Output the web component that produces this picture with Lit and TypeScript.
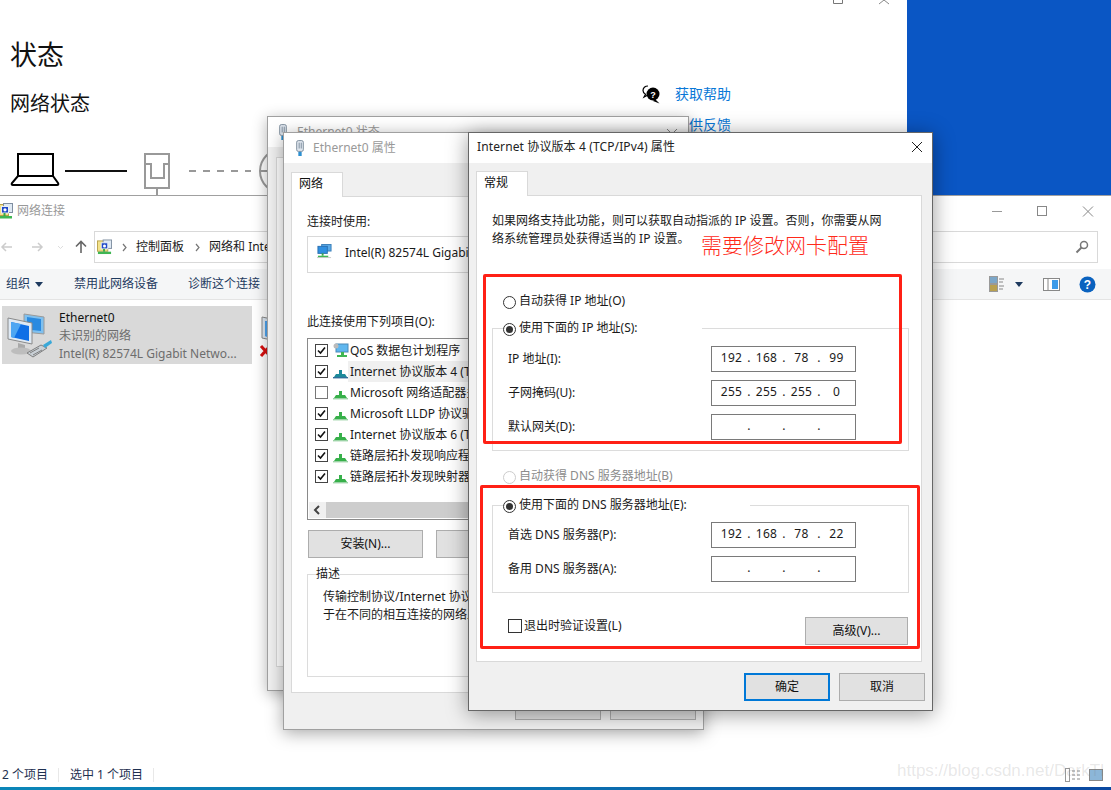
import { LitElement, html, css, svg } from "lit";
import { customElement } from "lit/decorators.js";

const netIcon = (cls = "nic") => html`<svg class=${cls} viewBox="0 0 16 16">
  <rect x="5" y="0.5" width="10" height="7" fill="#5aa9e6" stroke="#3b7fb8"/>
  <rect x="1" y="2.5" width="10" height="7.5" fill="#2f8fe0" stroke="#2a6fb0"/>
  <rect x="5" y="10" width="2" height="2.5" fill="#3aa84a"/>
  <rect x="1" y="12.5" width="11" height="2" fill="#3fb653"/>
  <rect x="0" y="14" width="15" height="1" fill="#c8c8c8"/>
</svg>`;

const cpIcon = (cls = "nic") => html`<svg class=${cls} viewBox="0 0 16 16">
  <rect x="0.5" y="1.500" width="11" height="11" fill="#f3e28a" stroke="#b9a24a"/>
  <rect x="6.500" y="0.500" width="9" height="9" fill="#dfe9f3" stroke="#7f8ea0"/>
  <rect x="4.500" y="3.500" width="7" height="6.500" fill="#1f49c8" stroke="#e8eef5"/>
  <circle cx="8" cy="6.800" r="1.600" fill="#fff"/>
  <rect x="6.500" y="10" width="2" height="3" fill="#3aa84a"/>
  <rect x="1" y="13" width="14" height="2.500" fill="#3fb653"/>
</svg>`;

const protoIcon = (teal = false) => html`<svg class="proto" viewBox="0 0 16 12">
  <path d="M6 3h3v4H6z" fill=${teal ? "#1c8a9a" : "#37b04a"}/>
  <path d="M3 7h9l2 3H1z" fill=${teal ? "#1c8a9a" : "#37b04a"}/>
  <rect x="0" y="10" width="15" height="1.4" fill=${teal ? "#2f6f9a" : "#9bd3a5"}/>
</svg>`;

const plugIcon = html`<svg class="plug" viewBox="0 0 12 20">
  <rect x="2" y="0.5" width="8" height="13" rx="2" fill="#dfe6ee" stroke="#6f7f90"/>
  <path d="M5 3v7M7.5 3v7" stroke="#6f7f90" fill="none"/>
  <rect x="4" y="14" width="4" height="5" fill="#2d8fd0"/>
</svg>`;

const bigNet = html`<svg class="bignet" viewBox="0 0 48 48">
  <path d="M18 2l20 3v17l-20-2z" fill="#7fc0ef" stroke="#9a9a9a"/>
  <path d="M21 5l14 2v12l-14-1.500z" fill="#2a8ae0"/>
  <path d="M2 6l24 5v21L2 27z" fill="#dfe9f3" stroke="#8a8a8a"/>
  <path d="M5 10l18 4v15L5 25z" fill="#0f6fe6"/>
  <path d="M5 10l10 2-7 14-3-1z" fill="#4ea6f2"/>
  <path d="M12 31l7 2v5l-7-2z" fill="#a9a9a9"/>
  <ellipse cx="15" cy="39" rx="10" ry="3.500" fill="#bdbdbd"/>
  <path d="M21 41l14-8 6 3-14 9z" fill="#c9d0d6" stroke="#7f7f7f"/>
  <path d="M24 41l9-5M27 43l9-5" stroke="#7f7f7f" fill="none"/>
  <path d="M37 33l8-5 1 3-7 5z" fill="#39a8d8"/>
</svg>`;

const ipField = (v: string[]) => html`<div class="ip">
  ${v.map((o, i) => html`<span class="oct">${o}</span>${i < 3 ? html`<span class="dot">.</span>` : ""}`)}
</div>`;

const radio = (on: boolean, dim = false) =>
  html`<i class="radio ${on ? "on" : ""} ${dim ? "dim" : ""}"></i>`;

const diagram = svg`
  <rect x="18" y="4" width="35" height="22" fill="none" stroke="#000" stroke-width="2"/>
  <path d="M18 26L12 33q-1 2 1 2h44q2 0 1-2l-5-7" fill="none" stroke="#000" stroke-width="2"/>
  <path d="M65 21h62" stroke="#111" stroke-width="2"/>
  <rect x="145" y="4" width="24" height="34" fill="none" stroke="#999" stroke-width="2"/>
  <path d="M145 14h6v14h13V14h5M157 38v8" fill="none" stroke="#999" stroke-width="2"/>
  <path d="M189 21h62" stroke="#999" stroke-width="2" stroke-dasharray="7 7"/>
  <circle cx="282" cy="21" r="22" fill="none" stroke="#999" stroke-width="2"/>
  <path d="M260 21h44" stroke="#999" stroke-width="2"/>
`;

@customElement("app-root")
export class AppRoot extends LitElement {
  static styles = css`
    :host {
      display: block;
      position: relative;
      width: 1111px;
      height: 790px;
      overflow: hidden;
      font: 12px/18px "Noto Sans", "Noto Sans CJK SC", sans-serif;
      color: #1a1a1a;
      background:
        linear-gradient(90deg, #0a86b8, #0a70b0 50%, #0a48a0) bottom / 100% 3px no-repeat,
        #0a56c4;
    }
    * { box-sizing: border-box; }
    .win { position: absolute; }

    /* settings */
    .settings { left: 0; top: 0; width: 907px; height: 196px; background: #fff; display: flex; }
    .set-left { width: 642px; padding: 35px 0 0 10px; }
    .set-left h1 { margin: 0; font-size: 27px; line-height: 40px; font-weight: 400; color: #111; }
    .set-left h2 { margin: 15px 0 0; font-size: 20px; line-height: 28px; font-weight: 400; color: #111; }
    .diagram { display: block; width: 320px; height: 46px; margin: 32px 0 0 -10px; }
    .set-right { padding-top: 84px; display: flex; flex-direction: column; gap: 11px; }
    .help { display: flex; align-items: center; height: 20px; gap: 14px; }
    .help svg { width: 19px; height: 19px; }
    .link { color: #0a78d7; font-size: 14px; line-height: 20px; }
    .feedback { padding-left: 33px; }
    .set-ctl { position: absolute; left: 830px; top: 0; width: 64px; height: 6px; }

    /* explorer */
    .net { left: 0; top: 195px; width: 1111px; height: 592px; background: #fff; border-top: 1px solid #a0a0a0; display: flex; flex-direction: column; }
    .net-title { height: 30px; display: flex; align-items: center; gap: 4px; color: #999; flex: none; }
    .net-title .nic { width: 16px; height: 16px; margin-left: -3px; }
    .net-ctl { margin-left: auto; width: 111px; height: 14px; margin-right: 9px; }
    .nav { height: 32px; margin-top: 5px; display: flex; align-items: center; flex: none; }
    .nav-arrows { width: 94px; height: 20px; flex: none; }
    .addr { flex: none; width: 1004px; height: 32px; border: 1px solid #d9d9d9; display: flex; align-items: center; padding: 0 6px 0 2px; color: #1a1a1a; }
    .addr .nic { width: 15px; height: 16px; margin-right: 10px; }
    .crumb-sep { width: 5px; height: 9px; margin: 0 9px 0 0; flex: none; }
    .addr span { margin-right: 11px; white-space: nowrap; }
    .addr .search { margin-left: auto; width: 14px; height: 14px; margin-right: 2px; }
    .tools { height: 31px; margin-top: 6px; background: #f5f6f7; border-bottom: 1px solid #e4e4e4; display: flex; align-items: center; padding-left: 6px; color: #1e3a5f; flex: none; }
    .tools span { white-space: nowrap; }
    .caret { width: 0; height: 0; border: 4px solid transparent; border-top: 5px solid #1e3a5f; border-bottom: 0; margin-left: 5px; flex: none; }
    .t2 { margin-left: 31px; }
    .t3 { margin-left: 30px; }
    .tools-right { margin-left: auto; display: flex; align-items: center; margin-right: 15px; gap: 9px; }
    .tools-right svg { display: block; }
    .tools-right .caret { margin: 0 11px 0 -1px; }
    .tools-right .helpbtn { margin-left: 10px; }
    .content { flex: 1; padding: 6px 0 0 2px; display: flex; gap: 8px; }
    .item { width: 250px; height: 58px; background: #d9d9d9; display: flex; padding: 2px 0 0 4px; align-items: center; gap: 5px; }
    .bignet { width: 48px; height: 48px; flex: none; }
    .item-text { line-height: 18px; color: #6d6d6d; white-space: nowrap; }
    .item-text b { font-weight: 400; color: #111; display: block; }
    .item2 { width: 40px; position: relative; padding-top: 5px; }
    .item2 .bignet { width: 48px; height: 48px; }
    .xmark { position: absolute; left: -1px; top: 38px; width: 13px; height: 14px; }
    .status { height: 24px; display: flex; align-items: center; padding-left: 2px; flex: none; color: #1e3050; }
    .status .sep { width: 1px; height: 14px; background: #e8e8e8; margin: 0 10px; }
    .status .s2 { margin-left: 1px; }
    .views { margin-left: auto; margin-right: 8px; width: 38px; height: 14px; }

    /* status window behind */
    .stat { left: 267px; top: 116px; width: 422px; height: 575px; background: #f0f0f0; border: 1px solid #a0a0a0; box-shadow: 0 3px 14px rgba(0,0,0,.3); }
    .stat-title { height: 30px; background: #fff; display: flex; align-items: center; color: #999; padding-left: 10px; gap: 9px; }
    .plug { width: 10px; height: 17px; flex: none; }
    .stat-panel { margin: 10px 0 0 8px; height: 510px; background: #fff; border: 1px solid #d9d9d9; }
    .stat-ctl { margin-left: auto; width: 12px; height: 8px; margin-right: 10px; }

    /* properties */
    .props { left: 283px; top: 132px; width: 421px; height: 598px; background: #f0f0f0; border: 1px solid #a0a0a0; box-shadow: 0 3px 16px rgba(0,0,0,.35); }
    .titlebar { height: 30px; background: #fff; display: flex; align-items: center; gap: 8px; padding-left: 11px; color: #999; }
    .tab { width: 52px; height: 25px; background: #fff; border: 1px solid #d9d9d9; border-bottom: 0; padding: 2px 0 0 7px; position: relative; z-index: 1; margin-bottom: -1px; color: #111; }
    .pbody { padding: 9px 7px 0; }
    .panel { background: #fff; border: 1px solid #d9d9d9; }
    .ppanel { height: 497px; padding: 16px 15px 15px; }
    .adapter { height: 37px; margin-top: 5px; border: 1px solid #d9d9d9; display: flex; align-items: flex-start; padding: 7px 0 0 9px; gap: 13px; white-space: nowrap; width: 381px; }
    .adapter .nic { width: 15px; height: 15px; margin-top: 0; }
    .plabel2 { margin-top: 40px; }
    .list { margin-top: 7px; width: 381px; height: 182px; border: 1px solid #8a8a8a; padding-top: 1px; display: flex; flex-direction: column; }
    .li { height: 21px; display: flex; align-items: center; padding-left: 7px; white-space: nowrap; flex: none; }
    .cb { width: 13px; height: 13px; border: 1px solid #444; background: #fff; flex: none; display: block; }
    .cb svg { display: block; width: 11px; height: 11px; }
    .cb.off { border-color: #777; }
    .proto { width: 16px; height: 12px; margin: 3px 1px 0 5px; flex: none; }
    .qos { width: 16px; height: 16px; margin: 0 1px 0 5px; flex: none; }
    .li.hl .t { background: #f0f0f0; padding: 0 0 0 2px; margin-left: -2px; line-height: 21px; height: 21px; flex: 1; }
    .sbar { margin-top: auto; margin-bottom: 1px; margin-left: 1px; margin-right: 1px; height: 16px; background: #f0f0f0; display: flex; align-items: center; }
    .sbar svg { width: 17px; height: 16px; flex: none; }
    .thumb { flex: 1; height: 16px; background: #cdcdcd; }
    .pbtns { display: flex; gap: 13px; margin-top: 10px; padding-left: 1px; }
    .btn { height: 28px; background: #e1e1e1; border: 1px solid #adadad; display: flex; align-items: center; justify-content: center; color: #111; white-space: nowrap; }
    .pb { width: 115px; }
    .pgroup { margin: 7px 0 0; padding: 5px 0 0 15px; border: 1px solid #dcdcdc; height: 112px; width: 381px; min-width: 0; }
    .pgroup legend { margin-left: -7px; padding: 0; font-size: 12px; }
    .pgroup div { white-space: nowrap; }
    .pfoot { display: flex; justify-content: flex-end; gap: 9px; margin-top: 8px; }
    .pfoot .btn { width: 86px; height: 19px; }

    /* ipv4 dialog */
    .dlg { left: 468px; top: 132px; width: 465px; height: 579px; background: #f0f0f0; border: 1px solid #666; box-shadow: 0 3px 20px rgba(0,0,0,.4); }
    .dlg-title { height: 30px; background: #fff; display: flex; align-items: center; padding: 0 0 2px 8px; color: #222; letter-spacing: .12px; }
    .dlg-title svg { margin-left: auto; margin-right: 10px; width: 10px; height: 10px; }
    .dbody { padding: 8px 10px 0 7px; }
    .dpanel { height: 467px; padding: 16px 13px 0 15px; }
    .intro { margin: 0; white-space: nowrap; }
    .rrow { display: flex; align-items: center; padding-left: 11px; gap: 3px; height: 18px; white-space: nowrap; }
    .r1 { margin-top: 44px; }
    .radio { width: 13px; height: 13px; border: 1px solid #333; border-radius: 50%; background: #fff; display: flex; flex: none; align-items: center; justify-content: center; margin-top: 2px; }
    .radio.on::after { content: ""; width: 7px; height: 7px; border-radius: 50%; background: #333; }
    .radio.dim { border-color: #ccc; }
    .dimtxt { color: #8c8c8c; }
    fieldset.fs { margin: 9px 0 0; padding: 9px 15px 10px; border: 1px solid #dcdcdc; width: 417px; min-width: 0; }
    fieldset.fs legend { padding: 0; margin-left: -5px; display: flex; align-items: center; gap: 3px; height: 18px; white-space: nowrap; }
    .lg1 { width: 199px; }
    .lg2 { width: 247px; }
    .r3 { margin-top: 16px; }
    fieldset.f2 { margin-top: 11px; padding-top: 8px; }
    .grid { display: grid; grid-template-columns: 203px 145px; row-gap: 8px; align-items: center; }
    .ip { height: 26px; border: 1px solid #7a7a7a; background: #fff; display: flex; align-items: center; padding: 0 0 3px 5px; font-size: 12px; letter-spacing: .3px; }
    .oct { width: 29px; text-align: center; }
    .dot { width: 6px; text-align: center; }
    .dfoot { margin-top: 24px; display: flex; justify-content: space-between; align-items: flex-start; padding-left: 16px; width: 416px; }
    .check { display: flex; align-items: center; gap: 2px; height: 18px; }
    .check .cb { width: 14px; height: 14px; border-color: #333; }
    .adv { width: 103px; }
    .dbtns { display: flex; justify-content: flex-end; gap: 9px; margin: 11px -3px 0 0; }
    .dbtns .btn { width: 86px; }
    .btn.ok { border: 2px solid #0078d7; }

    /* annotations */
    .redbox { position: absolute; border: 3px solid #ff2015; border-radius: 2px; pointer-events: none; }
    .rb1 { left: 483px; top: 274px; width: 419px; height: 170px; }
    .rb2 { left: 480px; top: 485px; width: 440px; height: 164px; }
    .note { position: absolute; left: 701px; top: 231px; font-size: 21px; line-height: 28px; color: #ff2a1a; font-weight: 300; white-space: nowrap; }
    .mark { position: absolute; left: 897px; top: 760px; font: 17px/22px "Liberation Sans", sans-serif; color: rgba(120,120,120,.18); white-space: nowrap; }
  `;

  render() {
    const labels = [
      "QoS 数据包计划程序",
      "Internet 协议版本 4 (TCP/IPv4)",
      "Microsoft 网络适配器多路传送器协议",
      "Microsoft LLDP 协议驱动程序",
      "Internet 协议版本 6 (TCP/IPv6)",
      "链路层拓扑发现响应程序",
      "链路层拓扑发现映射器 I/O 驱动程序",
    ];
    const tick = html`<svg viewBox="0 0 11 11"><path d="M2 5.500l2.500 2.500L9 2.500" fill="none" stroke="#111" stroke-width="1.600"/></svg>`;
    const chev = html`<svg class="crumb-sep" viewBox="0 0 5 9"><path d="M1 1l3 3.500-3 3.500" fill="none" stroke="#777" stroke-width="1.200"/></svg>`;
    return html`
      <section class="win settings">
        <div class="set-left">
          <h1>状态</h1>
          <h2>网络状态</h2>
          <svg class="diagram" viewBox="0 0 320 46">${diagram}</svg>
        </div>
        <div class="set-right">
          <div class="help">
            <svg viewBox="0 0 19 19">
              <path d="M6 1C3 1 1 3 1 5.500c0 2 1 3 2.500 3.700L2 12l4-2" fill="#fff" stroke="#000" stroke-width="1.200"/>
              <circle cx="11" cy="9" r="6.500" fill="#000"/>
              <path d="M13 14l4.500 4.500L11 16z" fill="#000"/>
              <text x="11" y="12.500" font-size="9" font-weight="700" fill="#fff" text-anchor="middle" font-family="Liberation Sans">?</text>
            </svg>
            <span class="link">获取帮助</span>
          </div>
          <div class="feedback"><span class="link">提供反馈</span></div>
        </div>
        <svg class="set-ctl" viewBox="0 0 64 6">
          <path d="M3.500 0v3.500h9V0" fill="none" stroke="#777"/>
          <path d="M49 4l5-4 5 4" fill="none" stroke="#888"/>
        </svg>
      </section>

      <section class="win net">
        <div class="net-title">
          ${cpIcon()}<span>网络连接</span>
          <svg class="net-ctl" viewBox="0 0 111 14">
            <path d="M1 7.500h10" stroke="#999"/>
            <rect x="46.500" y="2.500" width="9" height="9" fill="none" stroke="#888"/>
            <path d="M92 2.500l10 10M102 2.500l-10 10" stroke="#888"/>
          </svg>
        </div>
        <div class="nav">
          <svg class="nav-arrows" viewBox="0 0 94 20">
            <path d="M12 10H2M6 6l-4 4 4 4" fill="none" stroke="#ccc" stroke-width="1.500"/>
            <path d="M32 10h10M38 6l4 4-4 4" fill="none" stroke="#ccc" stroke-width="1.500"/>
            <path d="M58 9l2.500 2.500L63 9" fill="none" stroke="#ddd"/>
            <path d="M81 16V5M76 9.500L81 4.500l5 5" fill="none" stroke="#666" stroke-width="1.600"/>
          </svg>
          <div class="addr">
            ${cpIcon()}${chev}<span>控制面板</span>${chev}<span>网络和 Internet</span>${chev}<span>网络连接</span>
            <svg class="search" viewBox="0 0 14 14">
              <circle cx="9" cy="5" r="3.500" fill="none" stroke="#777" stroke-width="1.500"/>
              <path d="M6.500 7.500L1.500 12.500" stroke="#777" stroke-width="2"/>
            </svg>
          </div>
        </div>
        <div class="tools">
          <span>组织</span><i class="caret"></i>
          <span class="t2">禁用此网络设备</span>
          <span class="t3">诊断这个连接</span>
          <div class="tools-right">
            <svg width="18" height="16" viewBox="0 0 18 16">
              <rect x=".5" y=".5" width="8" height="7" fill="#7ba6c8" stroke="#999"/>
              <rect x=".5" y="8.500" width="8" height="7" fill="#b8a050" stroke="#999"/>
              <path d="M10 3h5M10 6h4M10 10h5M10 13h4" stroke="#888"/>
            </svg>
            <i class="caret"></i>
            <svg width="17" height="13" viewBox="0 0 17 13">
              <rect x=".5" y=".5" width="16" height="12" fill="#fff" stroke="#888"/>
              <rect x="9" y="2" width="6" height="9" fill="#3d9be9"/>
              <path d="M5 1v11" stroke="#888"/>
            </svg>
            <svg class="helpbtn" width="17" height="17" viewBox="0 0 17 17">
              <circle cx="8.500" cy="8.500" r="8" fill="#0a62bf"/>
              <text x="8.500" y="13" font-size="12" font-weight="700" fill="#fff" text-anchor="middle" font-family="Liberation Sans">?</text>
            </svg>
          </div>
        </div>
        <div class="content">
          <div class="item">
            ${bigNet}
            <div class="item-text">
              <b>Ethernet0</b>
              <div>未识别的网络</div>
              <div>Intel(R) 82574L Gigabit Netwo...</div>
            </div>
          </div>
          <div class="item2">
            ${bigNet}
            <svg class="xmark" viewBox="0 0 13 14"><path d="M2 2l9 10M11 2L2 12" stroke="#d80f0f" stroke-width="3"/></svg>
          </div>
        </div>
        <div class="status">
          <span>2 个项目</span><i class="sep"></i><span class="s2">选中 1 个项目</span><i class="sep"></i>
          <svg class="views" viewBox="0 0 38 14">
            <rect x=".5" y=".5" width="4" height="13" fill="#fff" stroke="#999"/>
            <path d="M7 3h9M7 7h9M7 11h9" stroke="#888" stroke-dasharray="3 2"/>
            <rect x="24.500" y="1.500" width="13" height="11" fill="#8cb6d8" stroke="#888"/>
          </svg>
        </div>
      </section>

      <section class="win stat">
        <div class="stat-title">
          ${plugIcon}<span>Ethernet0 状态</span>
          <svg class="stat-ctl" viewBox="0 0 12 8"><path d="M1 1l5 5 5-5" fill="none" stroke="#888"/></svg>
        </div>
        <div class="stat-panel"></div>
      </section>

      <section class="win props">
        <div class="titlebar">${plugIcon}<span>Ethernet0 属性</span></div>
        <div class="pbody">
          <div class="tab">网络</div>
          <div class="panel ppanel">
            <div>连接时使用:</div>
            <div class="adapter">${netIcon()}<span>Intel(R) 82574L Gigabit Network Connection</span></div>
            <div class="plabel2">此连接使用下列项目(O):</div>
            <div class="list">
              ${labels.map((l, i) => html`<div class="li ${i === 1 ? "hl" : ""}">
                <i class="cb ${i === 2 ? "off" : ""}">${i === 2 ? "" : tick}</i>
                ${i === 0
                  ? html`<svg class="qos" viewBox="0 0 16 16">
                      <rect x="3" y="1" width="12" height="8" fill="#5fb7ef" stroke="#4a8ab8"/>
                      <circle cx="3" cy="3" r="2.500" fill="#bbb"/>
                      <path d="M8 9h3v3H8z" fill="#3fb653"/><path d="M4 12h10v2H4z" fill="#3fb653"/>
                    </svg>`
                  : protoIcon(i === 1)}
                <span class="t">${l}</span>
              </div>`)}
              <div class="sbar">
                <svg viewBox="0 0 17 16"><path d="M10 4l-4 4 4 4" fill="none" stroke="#444" stroke-width="2"/></svg>
                <div class="thumb"></div>
              </div>
            </div>
            <div class="pbtns">
              <div class="btn pb">安装(N)...</div>
              <div class="btn pb"></div>
            </div>
            <fieldset class="pgroup">
              <legend>描述</legend>
              <div>传输控制协议/Internet 协议。该协议是默认的广域网络协议，用</div>
              <div>于在不同的相互连接的网络上通信。</div>
            </fieldset>
          </div>
          <div class="pfoot">
            <div class="btn"></div>
            <div class="btn"></div>
          </div>
        </div>
      </section>

      <section class="win dlg">
        <div class="dlg-title">
          <span>Internet 协议版本 4 (TCP/IPv4) 属性</span>
          <svg viewBox="0 0 10 10"><path d="M0 0l10 10M10 0L0 10" stroke="#222"/></svg>
        </div>
        <div class="dbody">
          <div class="tab">常规</div>
          <div class="panel dpanel">
            <p class="intro">如果网络支持此功能，则可以获取自动指派的 IP 设置。否则，你需要从网<br />络系统管理员处获得适当的 IP 设置。</p>
            <div class="rrow r1">${radio(false)}<span>自动获得 IP 地址(O)</span></div>
            <fieldset class="fs">
              <legend class="lg1">${radio(true)}<span>使用下面的 IP 地址(S):</span></legend>
              <div class="grid">
                <span>IP 地址(I):</span>${ipField(["192", "168", "78", "99"])}
                <span>子网掩码(U):</span>${ipField(["255", "255", "255", "0"])}
                <span>默认网关(D):</span>${ipField(["", "", "", ""])}
              </div>
            </fieldset>
            <div class="rrow r3">${radio(false, true)}<span class="dimtxt">自动获得 DNS 服务器地址(B)</span></div>
            <fieldset class="fs f2">
              <legend class="lg2">${radio(true)}<span>使用下面的 DNS 服务器地址(E):</span></legend>
              <div class="grid">
                <span>首选 DNS 服务器(P):</span>${ipField(["192", "168", "78", "22"])}
                <span>备用 DNS 服务器(A):</span>${ipField(["", "", "", ""])}
              </div>
            </fieldset>
            <div class="dfoot">
              <div class="check"><i class="cb"></i><span>退出时验证设置(L)</span></div>
              <div class="btn adv">高级(V)...</div>
            </div>
          </div>
          <div class="dbtns">
            <div class="btn ok">确定</div>
            <div class="btn">取消</div>
          </div>
        </div>
      </section>

      <div class="redbox rb1"></div>
      <div class="redbox rb2"></div>
      <div class="note">需要修改网卡配置</div>
      <div class="mark">https://blog.csdn.net/DarkTl</div>
    `;
  }
}
